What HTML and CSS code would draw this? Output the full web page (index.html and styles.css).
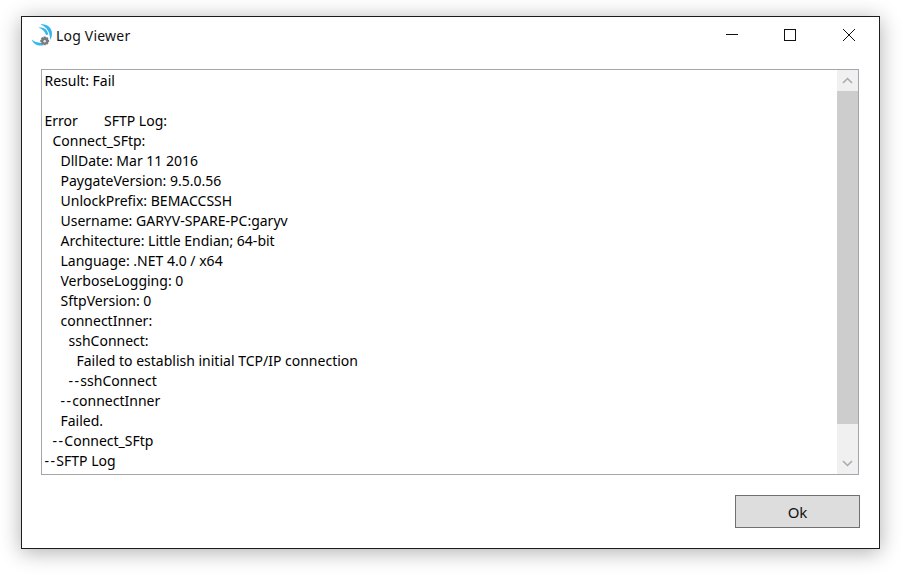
FILE: index.html
```html
<!DOCTYPE html>
<html lang="en">
<head>
<meta charset="utf-8">
<title>Log Viewer</title>
<link rel="stylesheet" href="styles.css">
</head>
<body>
<div class="window">
  <header class="titlebar">
    <svg class="app-icon" width="24" height="24" viewBox="0 0 24 24" aria-hidden="true">
      <path d="M9.500 1.500C15.500.500 21 4.500 21 10.500c0 2.500-.6 4.500-2 6.500C19.500 9.500 15.500 3.500 9.500 1.500z" fill="#35b5ee"/>
      <path d="M7.500 4.800c4.500-1 9 1.700 9.800 6.700l-2.300.5C14 8.500 11.500 5.800 7.500 4.800z" fill="#35b5ee"/>
      <path d="M.800 16.500c2.500 2.200 5.500 3.300 8.700 3.300 1 1 2.200 1.800 3.500 2.200-5 1.600-10.500-.3-12.200-5.500z" fill="#35b5ee"/>
      <path d="M12.700 13.500h2l.3 1.200 1.100-.6 1.400 1.400-.6 1.100 1.200.3v2l-1.200.3.600 1.100-1.400 1.400-1.100-.6-.3 1.200h-2l-.3-1.200-1.100.6-1.400-1.400.6-1.100-1.200-.3v-2l1.200-.3-.6-1.100 1.400-1.400 1.100.6z" fill="#777b7f"/>
      <circle cx="13.700" cy="18.300" r="1.200" fill="#e8e8e8"/>
    </svg>
    <span class="title">Log Viewer</span>
    <div class="controls">
      <svg class="ctl ctl-min" width="12" height="12" viewBox="0 0 12 12" aria-hidden="true"><path d="M0 5.500h12" stroke="#111" fill="none"/></svg>
      <svg class="ctl" width="12" height="12" viewBox="0 0 12 12" aria-hidden="true"><rect x=".5" y=".5" width="11" height="11" stroke="#111" fill="none"/></svg>
      <svg class="ctl" width="12" height="12" viewBox="0 0 12 12" aria-hidden="true"><path d="M0 0l12 12M12 0L0 12" stroke="#111" fill="none"/></svg>
    </div>
  </header>
  <main class="logbox">
    <div class="logtext">
      <div>Result: Fail</div>
      <div class="blank"></div>
      <div class="tabbed"><span class="tabcell">Error</span><span>SFTP Log:</span></div>
      <div class="i1">Connect_SFtp:</div>
      <div class="i2">DllDate: Mar 11 2016</div>
      <div class="i2">PaygateVersion: 9.5.0.56</div>
      <div class="i2">UnlockPrefix: BEMACCSSH</div>
      <div class="i2">Username: GARYV-SPARE-PC:garyv</div>
      <div class="i2">Architecture: Little Endian; 64-bit</div>
      <div class="i2">Language: .NET 4.0 / x64</div>
      <div class="i2">VerboseLogging: 0</div>
      <div class="i2">SftpVersion: 0</div>
      <div class="i2">connectInner:</div>
      <div class="i3">sshConnect:</div>
      <div class="i4">Failed to establish initial TCP/IP connection</div>
      <div class="i3"><span class="dash">--</span>sshConnect</div>
      <div class="i2"><span class="dash">--</span>connectInner</div>
      <div class="i2">Failed.</div>
      <div class="i1"><span class="dash">--</span>Connect_SFtp</div>
      <div><span class="dash">--</span>SFTP Log</div>
    </div>
    <div class="scrollbar">
      <div class="arrow"><svg width="11" height="7" viewBox="0 0 11 7" aria-hidden="true"><path d="M1 6l4.500-4.500L10 6" stroke="#a9a9a9" stroke-width="1.500" fill="none"/></svg></div>
      <div class="thumb"></div>
      <div class="track"></div>
      <div class="arrow"><svg width="11" height="7" viewBox="0 0 11 7" aria-hidden="true"><path d="M1 1l4.500 4.500L10 1" stroke="#a9a9a9" stroke-width="1.500" fill="none"/></svg></div>
    </div>
  </main>
  <footer class="actions"><button class="ok" type="button">Ok</button></footer>
</div>
</body>
</html>
```
FILE: styles.css
```css
html, body { margin: 0; height: 100%; background: #fff; overflow: hidden; }
body { padding: 16px 28px 29px 21px; box-sizing: border-box; width: 908px; height: 578px; }
.window {
  box-sizing: border-box; width: 859px; height: 533px; background: #fff;
  border: 1px solid #1c1c1c; box-shadow: 0 3px 20px rgba(0,0,0,.32);
  display: flex; flex-direction: column;
  font-family: "Noto Sans", "Open Sans", sans-serif; color: #000; font-size: 14px;
}
.titlebar { display: flex; align-items: center; height: 36px; padding-left: 9px; flex: none; }
.app-icon { flex: none; }
.title { margin-left: 1px; color: #111; letter-spacing: .2px; }
.controls { margin-left: auto; display: flex; gap: 47px; padding-right: 24px; align-items: center; }
.ctl { width: 12px; height: 12px; }
.ctl-min { margin-right: -1px; }
.logbox {
  flex: none; box-sizing: border-box; margin: 16px 0 0 19px; width: 818px; height: 406px;
  border: 1px solid #a5a5ad; display: flex;
}
.logtext { flex: 1; padding: 1px 0 0 2.5px; line-height: 20px; white-space: nowrap; overflow: hidden; }
.blank { height: 20px; }
.tabcell { display: inline-block; width: 59.5px; }
.dash { letter-spacing: 1.4px; }
.i1 { padding-left: 8px; }
.i2 { padding-left: 16px; }
.i3 { padding-left: 24px; }
.i4 { padding-left: 32px; }
.scrollbar { flex: none; width: 21px; background: #f0f0f0; display: flex; flex-direction: column; }
.arrow { height: 21px; flex: none; display: flex; align-items: center; justify-content: center; }
.thumb { height: 333px; background: #cdcdcd; flex: none; }
.track { flex: 1; }
.actions { display: flex; justify-content: flex-end; margin-top: 20px; padding-right: 19px; }
.ok {
  box-sizing: border-box; width: 125px; height: 33px; background: #dddddd;
  border: 1px solid #707070; border-radius: 0; padding: 1px 0 0;
  font: inherit; font-size: 15px; color: #111;
}
```
